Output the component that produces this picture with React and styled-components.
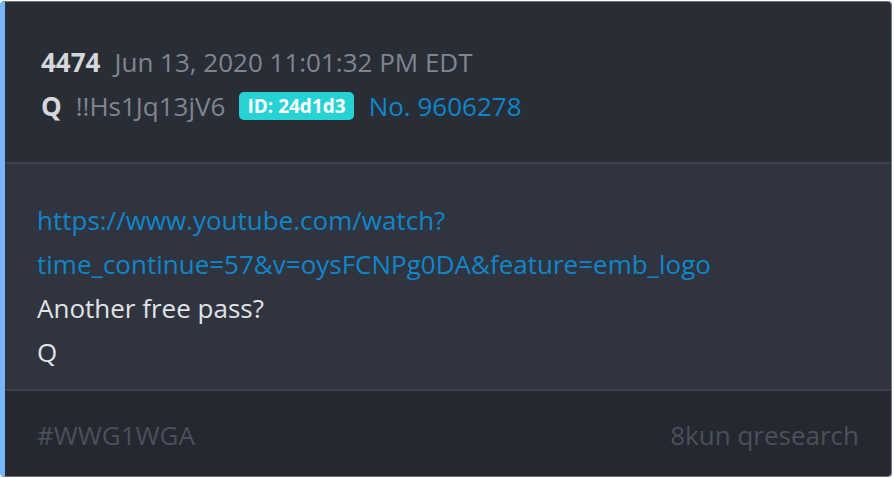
import React from "react";
import styled, { createGlobalStyle } from "styled-components";

const GlobalStyle = createGlobalStyle`
  html, body {
    margin: 0;
    padding: 0;
    background: #ffffff;
  }
  body {
    font-family: "Open Sans", "Noto Sans", sans-serif;
  }
`;

const post = {
  number: 4474,
  date: "Jun 13, 2020 11:01:32 PM EDT",
  author: "Q",
  trip: "!!Hs1Jq13jV6",
  id: "24d1d3",
  no: "9606278",
  lines: [
    { text: "https://www.youtube.com/watch?", link: true },
    { text: "time_continue=57&v=oysFCNPg0DA&feature=emb_logo", link: true },
    { text: "Another free pass?" },
    { text: "Q" },
  ],
  tag: "#WWG1WGA",
  source: "8kun qresearch",
};

export default function App() {
  return (
    <>
      <GlobalStyle />
      <Card>
        <Header>
          <MetaRow>
            <Strong>{post.number}</Strong>
            <Muted>{post.date}</Muted>
          </MetaRow>
          <MetaRow>
            <Strong>{post.author}</Strong>
            <Muted>{post.trip}</Muted>
            <IdBadge>ID: {post.id}</IdBadge>
            <PostLink href="#">No. {post.no}</PostLink>
          </MetaRow>
        </Header>

        <Body>
          {post.lines.map((line, i) =>
            line.link ? (
              <Line key={i}>
                <BodyLink href="#">{line.text}</BodyLink>
              </Line>
            ) : (
              <Line key={i}>{line.text}</Line>
            )
          )}
        </Body>

        <Footer>
          <span>{post.tag}</span>
          <span>{post.source}</span>
        </Footer>
      </Card>
    </>
  );
}

const Card = styled.div`
  margin: 1px 2px 0 0;
  border: 1px solid #70747c;
  border-left: 5px solid #78b7f7;
  border-radius: 4px;
  overflow: hidden;
  font-size: 26px;
  line-height: 44px;
`;

const Header = styled.div`
  background: #292d36;
  padding: 38px 32px 34px 36px;
  border-bottom: 2px solid #3b4049;
`;

const MetaRow = styled.div`
  display: flex;
  align-items: center;
  height: 44px;
`;

const Strong = styled.span`
  font-weight: 700;
  color: #d6d7da;
  margin-right: 14px;
`;

const Muted = styled.span`
  color: #80858f;
  margin-right: 14px;
`;

const IdBadge = styled.span`
  background: #27d2d4;
  color: #ffffff;
  font-weight: 700;
  font-size: 19px;
  line-height: 28px;
  padding: 0 8px;
  border-radius: 5px;
  margin-right: 15px;
`;

const PostLink = styled.a`
  color: #0f86cc;
  text-decoration: none;
`;

const Body = styled.div`
  background: #2f343e;
  padding: 34px 32px 15px;
  border-bottom: 2px solid #3b4049;
  color: #e2e3e6;
`;

const Line = styled.div`
  white-space: nowrap;
`;

const BodyLink = styled.a`
  color: #0f86cc;
  text-decoration: none;
`;

const Footer = styled.div`
  background: #252830;
  padding: 22px 32px 19px;
  display: flex;
  justify-content: space-between;
  color: #4b505a;
`;
